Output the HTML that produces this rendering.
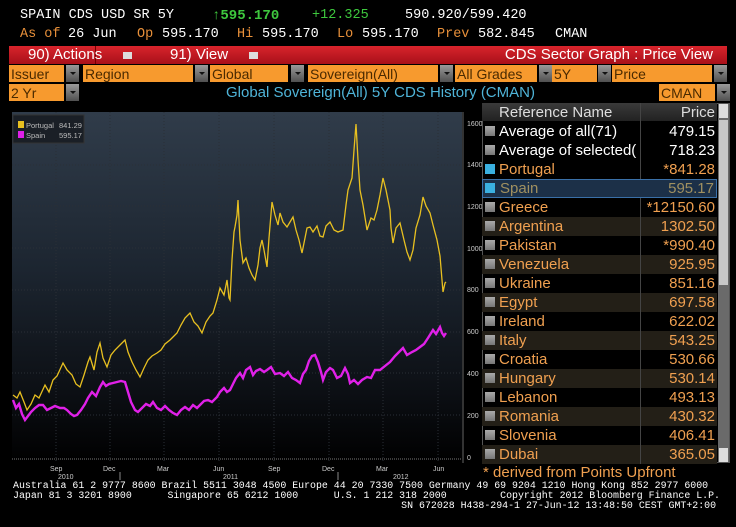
<!DOCTYPE html>
<html><head><meta charset="utf-8"><style>
*{margin:0;padding:0;box-sizing:border-box}
body{width:736px;height:527px;background:#000;position:relative;overflow:hidden;font-family:"Liberation Sans",sans-serif}
.a{position:absolute;white-space:nowrap}
.m{font-family:"Liberation Mono",monospace}
.t{position:absolute;top:27px;font-family:"Liberation Mono",monospace;font-size:13.5px;white-space:nowrap}
.o{color:#e8903a}.w{color:#fff}
.f{position:absolute;font-family:"Liberation Mono",monospace;font-size:10px;line-height:10px;color:#fff;white-space:pre}
.ob{position:absolute;height:17px;background:#f79a2e;color:#4a2a00;font-size:14px;line-height:18px;padding-left:2px;overflow:hidden}
.dd{position:absolute;height:17px;width:13px;background:linear-gradient(#9a9a9a,#505050)}
.dd:after{content:"";position:absolute;left:4px;top:7px;border-left:3px solid transparent;border-right:3px solid transparent;border-top:3px solid #111}
.row{position:absolute;left:482px;width:235px;height:19px;font-size:15px;line-height:19px;color:#f0a050}
.row .cb{position:absolute;left:3px;top:4px;width:10px;height:10px;background:linear-gradient(#aaa,#777)}
.row .n{position:absolute;left:17px}
.row .p{position:absolute;right:2px}
.row .s{position:absolute;left:158px;top:0;width:1px;height:19px;background:#444}
.alt{background:#231f17}
</style></head><body>
<div class="a m" style="left:20px;top:8px;font-size:13.5px;color:#fff">SPAIN CDS USD SR 5Y</div>
<div class="a m" style="left:212px;top:8px;font-size:14px;color:#3ec83e">↑<b>595.170</b></div>
<div class="a m" style="left:312px;top:8px;font-size:13.5px;color:#3ec83e">+12.325</div>
<div class="a m" style="left:405px;top:8px;font-size:13.5px;color:#fff">590.920/599.420</div>
<div class="t o" style="left:20px">As of</div><div class="t w" style="left:68px">26 Jun</div>
<div class="t o" style="left:137px">Op</div><div class="t w" style="left:162px">595.170</div>
<div class="t o" style="left:237px">Hi</div><div class="t w" style="left:262px">595.170</div>
<div class="t o" style="left:337px">Lo</div><div class="t w" style="left:362px">595.170</div>
<div class="t o" style="left:437px">Prev</div><div class="t w" style="left:478px">582.845</div>
<div class="t w" style="left:555px">CMAN</div>
<div class="a" style="left:9px;top:46px;width:718px;height:18px;background:linear-gradient(#d8242c,#a8101a)"></div>
<div class="a" style="left:95px;top:46px;width:1px;height:18px;background:#700"></div>
<div class="a" style="left:28px;top:46px;font-size:15px;color:#fff;line-height:18px">90) Actions</div>
<div class="a" style="left:123px;top:52px;width:9px;height:7px;background:#ddd"></div>
<div class="a" style="left:170px;top:46px;font-size:15px;color:#fff;line-height:18px">91) View</div>
<div class="a" style="left:249px;top:52px;width:9px;height:7px;background:#ddd"></div>
<div class="a" style="right:23px;top:46px;font-size:15px;color:#fff;line-height:18px">CDS Sector Graph : Price View</div>
<div class="ob" style="left:9px;top:65px;width:55px">Issuer</div><div class="dd" style="left:66px;top:65px"></div>
<div class="ob" style="left:83px;top:65px;width:110px">Region</div><div class="dd" style="left:195px;top:65px"></div>
<div class="ob" style="left:210px;top:65px;width:78px">Global</div><div class="dd" style="left:291px;top:65px"></div>
<div class="ob" style="left:308px;top:65px;width:130px">Sovereign(All)</div><div class="dd" style="left:440px;top:65px"></div>
<div class="ob" style="left:455px;top:65px;width:82px">All Grades</div><div class="dd" style="left:539px;top:65px"></div>
<div class="ob" style="left:552px;top:65px;width:45px">5Y CDS</div><div class="dd" style="left:598px;top:65px"></div>
<div class="ob" style="left:612px;top:65px;width:100px">Price</div><div class="dd" style="left:714px;top:65px"></div>
<div class="ob" style="left:9px;top:84px;width:55px">2 Yr</div><div class="dd" style="left:66px;top:84px"></div>
<div class="a" style="left:226px;top:84px;font-size:15px;line-height:18px;color:#4fb4d8">Global Sovereign(All) 5Y CDS History (CMAN)</div>
<div class="ob" style="left:659px;top:84px;width:56px">CMAN</div><div class="dd" style="left:717px;top:84px"></div>

<svg class="a" style="left:0;top:103px" width="482" height="380" viewBox="0 103 482 380">
<defs><linearGradient id="g" x1="0" y1="0" x2="0" y2="1"><stop offset="0" stop-color="#303c4a"/><stop offset="0.45" stop-color="#1c2530"/><stop offset="0.8" stop-color="#0c0f14"/><stop offset="1" stop-color="#000"/></linearGradient></defs>
<rect x="12" y="112" width="450" height="351" fill="url(#g)"/>
<g stroke="#2a2f36" stroke-width="1" stroke-dasharray="1,2">
<line x1="12" y1="415" x2="462" y2="415"/><line x1="12" y1="373" x2="462" y2="373"/><line x1="12" y1="332" x2="462" y2="332"/><line x1="12" y1="290" x2="462" y2="290"/><line x1="12" y1="248" x2="462" y2="248"/><line x1="12" y1="206" x2="462" y2="206"/><line x1="12" y1="165" x2="462" y2="165"/>
<line x1="56" y1="112" x2="56" y2="463"/><line x1="110" y1="112" x2="110" y2="463"/><line x1="164" y1="112" x2="164" y2="463"/><line x1="219" y1="112" x2="219" y2="463"/><line x1="274" y1="112" x2="274" y2="463"/><line x1="329" y1="112" x2="329" y2="463"/><line x1="383" y1="112" x2="383" y2="463"/><line x1="438" y1="112" x2="438" y2="463"/>
</g>
<line x1="12" y1="459" x2="462" y2="459" stroke="#777" stroke-dasharray="1,1"/>
<line x1="463" y1="112" x2="463" y2="463" stroke="#666"/>
<polyline fill="none" stroke="#e8c020" stroke-width="1.3" points="13,395 17,398 20,392 24,402 27,410 31,404 35,395 39,398 45,385 49,392 53,380 57,376 63,363 67,370 72,375 76,384 80,387 84,375 88,362 90,357 94,370 97,352 100,343 103,358 107,367 111,355 115,350 120,345 125,340 128,352 132,362 136,370 140,377 144,368 148,360 152,356 157,353 161,350 165,344 170,340 174,336 177,333 181,325 185,318 190,313 194,322 198,326 202,333 206,322 210,316 213,313 217,300 220,288 224,295 227,280 229,298 230,300 232,260 234,232 235,227 237,215 238,200 240,240 243,263 246,258 249,268 252,275 255,280 258,265 260,248 262,240 264,250 267,267 269,238 272,202 275,215 278,225 280,213 283,222 287,227 290,222 293,217 296,230 299,240 302,253 305,238 307,228 310,227 313,232 317,226 320,236 323,237 326,226 330,222 334,230 338,232 343,230 346,205 348,190 352,178 354,150 356,124 358,160 360,190 363,205 367,230 371,218 374,220 377,210 380,195 383,178 386,190 390,210 391,228 393,243 396,228 400,223 404,240 407,252 410,260 413,250 416,228 420,215 423,197 426,206 430,213 433,225 437,240 440,256 442,280 443,292 445,283 446,282"/>
<polyline fill="none" stroke="#e020e8" stroke-width="2.4" points="13,400 16,408 19,404 22,414 25,420 28,416 31,412 35,408 39,405 43,405 47,410 51,408 55,406 60,408 64,408 67,410 71,414 74,416 77,415 81,410 85,404 88,398 92,392 96,396 100,387 103,382 106,386 109,384 113,383 117,382 121,381 125,382 128,392 131,402 135,410 138,412 142,408 146,404 150,406 153,402 157,408 161,410 165,406 169,410 173,413 177,415 181,410 185,407 189,410 193,405 197,408 200,405 204,401 208,400 212,402 217,397 220,392 224,388 227,392 230,390 233,384 236,378 240,373 243,378 246,370 250,367 253,375 256,371 260,369 264,372 267,370 271,367 275,374 280,373 284,376 288,372 292,378 296,380 300,383 303,374 306,370 309,361 312,356 315,355 318,362 321,372 323,380 326,372 330,368 333,370 337,378 341,376 345,368 348,374 350,383 354,380 358,384 362,380 367,377 371,378 375,370 380,370 385,366 390,362 395,356 399,352 403,348 407,355 412,352 416,350 420,347 424,344 428,338 433,330 436,334 440,327 442,333 444,336 446,333"/>
<rect x="13" y="115" width="71" height="28" fill="#1a1f26" stroke="#333"/>
<rect x="18" y="121" width="6" height="7" fill="#e8c020"/><rect x="18" y="131" width="6" height="7" fill="#e020e8"/>
<g font-family="Liberation Sans" font-size="7.5" fill="#bbb"><text x="26" y="128">Portugal</text><text x="59" y="128">841.29</text><text x="26" y="138">Spain</text><text x="59" y="138">595.17</text></g>
<g font-family="Liberation Sans" font-size="7" fill="#ccc"><text x="467" y="126">1600</text><text x="467" y="167">1400</text><text x="467" y="209">1200</text><text x="467" y="251">1000</text><text x="467" y="292">800</text><text x="467" y="334">600</text><text x="467" y="376">400</text><text x="467" y="418">200</text><text x="467" y="460">0</text>
<text x="50" y="471">Sep</text><text x="103" y="471">Dec</text><text x="157" y="471">Mar</text><text x="213" y="471">Jun</text><text x="268" y="471">Sep</text><text x="322" y="471">Dec</text><text x="376" y="471">Mar</text><text x="433" y="471">Jun</text>
<text x="58" y="479">2010</text><text x="223" y="479">2011</text><text x="393" y="479">2012</text></g>
<line x1="120" y1="472" x2="120" y2="480" stroke="#888"/><line x1="338" y1="472" x2="338" y2="480" stroke="#888"/>
</svg>

<div class="a" style="left:482px;top:103px;width:248px;height:360px;border:1px solid #555"></div>
<div class="row" style="top:103px;height:18px;background:linear-gradient(#3a3a3a,#222);color:#ddd"><span class="n">Reference Name</span><span class="p">Price</span><span class="s"></span></div>
<div class="row" style="top:122px;color:#fff"><span class="cb"></span><span class="n">Average of all(71)</span><span class="p">479.15</span><span class="s"></span></div>
<div class="row" style="top:141px;color:#fff"><span class="cb"></span><span class="n">Average of selected(</span><span class="p">718.23</span><span class="s"></span></div>
<div class="row" style="top:160px"><span class="cb" style="background:#3ab0e0"></span><span class="n">Portugal</span><span class="p">*841.28</span><span class="s"></span></div>
<div class="row" style="top:179px;background:#1c3048;border:1px solid #3a70a8;color:#a09060"><span class="cb" style="background:#3ab0e0;top:3px;left:2px"></span><span class="n" style="top:-1px">Spain</span><span class="p" style="top:-1px">595.17</span></div>
<div class="row" style="top:198px"><span class="cb"></span><span class="n">Greece</span><span class="p">*12150.60</span><span class="s"></span></div>
<div class="row alt" style="top:217px"><span class="cb"></span><span class="n">Argentina</span><span class="p">1302.50</span><span class="s"></span></div>
<div class="row" style="top:236px"><span class="cb"></span><span class="n">Pakistan</span><span class="p">*990.40</span><span class="s"></span></div>
<div class="row alt" style="top:255px"><span class="cb"></span><span class="n">Venezuela</span><span class="p">925.95</span><span class="s"></span></div>
<div class="row" style="top:274px"><span class="cb"></span><span class="n">Ukraine</span><span class="p">851.16</span><span class="s"></span></div>
<div class="row alt" style="top:293px"><span class="cb"></span><span class="n">Egypt</span><span class="p">697.58</span><span class="s"></span></div>
<div class="row" style="top:312px"><span class="cb"></span><span class="n">Ireland</span><span class="p">622.02</span><span class="s"></span></div>
<div class="row alt" style="top:331px"><span class="cb"></span><span class="n">Italy</span><span class="p">543.25</span><span class="s"></span></div>
<div class="row" style="top:350px"><span class="cb"></span><span class="n">Croatia</span><span class="p">530.66</span><span class="s"></span></div>
<div class="row alt" style="top:369px"><span class="cb"></span><span class="n">Hungary</span><span class="p">530.14</span><span class="s"></span></div>
<div class="row" style="top:388px"><span class="cb"></span><span class="n">Lebanon</span><span class="p">493.13</span><span class="s"></span></div>
<div class="row alt" style="top:407px"><span class="cb"></span><span class="n">Romania</span><span class="p">430.32</span><span class="s"></span></div>
<div class="row" style="top:426px"><span class="cb"></span><span class="n">Slovenia</span><span class="p">406.41</span><span class="s"></span></div>
<div class="row alt" style="top:445px"><span class="cb"></span><span class="n">Dubai</span><span class="p">365.05</span><span class="s"></span></div>
<div class="a" style="left:718px;top:104px;width:11px;height:358px;background:#6a6a6a"></div>
<div class="a" style="left:719px;top:120px;width:9px;height:165px;background:#c8c8c8"></div>
<div class="a" style="left:719px;top:104px;width:9px;height:14px;background:#ddd"></div>
<div class="a" style="left:719px;top:448px;width:9px;height:14px;background:#ddd"></div>
<div class="a" style="left:483px;top:464px;font-size:15px;color:#f0a050">* derived from Points Upfront</div>
<div class="f" style="left:13px;top:482px;transform:scaleX(0.99);transform-origin:0 0">Australia 61 2 9777 8600 Brazil 5511 3048 4500 Europe 44 20 7330 7500 Germany 49 69 9204 1210 Hong Kong 852 2977 6000</div>
<div class="f" style="left:13px;top:492px;transform:scaleX(0.99);transform-origin:0 0">Japan 81 3 3201 8900      Singapore 65 6212 1000      U.S. 1 212 318 2000         Copyright 2012 Bloomberg Finance L.P.</div>
<div class="f" style="right:20px;top:502px;transform:scaleX(0.99);transform-origin:100% 0">SN 672028 H438-294-1 27-Jun-12 13:48:50 CEST GMT+2:00</div>
</body></html>
